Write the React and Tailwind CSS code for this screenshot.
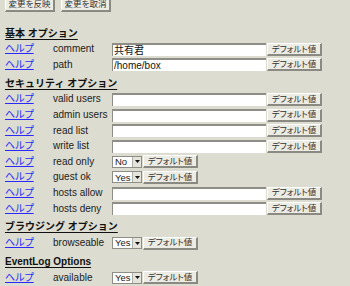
import React from "react";

const Btn = ({ children, className = "" }) => (
  <button
    className={
      "h-[13px] px-[4px] bg-[#ecebe4] border-t border-l border-t-white border-l-white border-r-2 border-b-2 border-r-[#8a8a82] border-b-[#8a8a82] text-[8.5px] leading-none text-[#333] [font-feature-settings:'palt'] flex items-center justify-center whitespace-nowrap " +
      className
    }
  >
    {children}
  </button>
);

const TextInput = ({ value = "" }) => (
  <div className="w-[154px] h-[13px] bg-white border-t-2 border-l border-t-[#8e8e86] border-l-[#8e8e86] text-[10px] leading-[11px] pl-[1px] text-[#111] whitespace-nowrap overflow-hidden">
    {value}
  </div>
);

const Select = ({ value }) => (
  <div className="w-[30px] h-[12px] bg-white border border-[#8e8e86] flex items-center text-[9.5px] leading-none text-[#222]">
    <span className="flex-1 pl-[2px]">{value}</span>
    <span className="w-[9px] h-[10px] bg-[#e4e3dc] border-l border-[#b0b0a8] flex items-center justify-center">
      <svg width="5" height="3" viewBox="0 0 5 3"><path d="M0 0h5L2.5 3z" fill="#111" /></svg>
    </span>
  </div>
);

const Row = ({ label, children }) => (
  <div className="h-[15.6px] flex items-center">
    <a href="#" className="w-[48px] text-[10px] text-[#2a2aff] underline leading-none [font-feature-settings:'palt']">
      ヘルプ
    </a>
    <span className="w-[59px] text-[10px] text-[#222] leading-none">{label}</span>
    <div className="flex items-center gap-[1px]">{children}</div>
  </div>
);

const TextRow = ({ label, value }) => (
  <Row label={label}>
    <TextInput value={value} />
    <Btn className="w-[55px]">デフォルト値</Btn>
  </Row>
);

const SelRow = ({ label, value }) => (
  <Row label={label}>
    <Select value={value} />
    <Btn className="w-[55px]">デフォルト値</Btn>
  </Row>
);

const Heading = ({ children }) => (
  <div className="h-[19px] flex items-end pb-[3px]">
    <span className="font-bold text-[10px] leading-none underline underline-offset-[2px] text-[#111]">
      {children}
    </span>
  </div>
);

export default function App() {
  return (
    <div className="w-[350px] h-[286px] overflow-hidden bg-[#dcdcd0] pl-[5px] font-['Liberation_Sans','Noto_Sans_CJK_JP',sans-serif]">
      <div className="flex gap-[6px] -mt-[2px] h-[12px]">
        <Btn className="w-[50px] h-[14px]">変更を反映</Btn>
        <Btn className="w-[50px] h-[14px]">変更を取消</Btn>
      </div>
      <div className="h-[12.5px]" />
      <Heading>基本 オプション</Heading>
      <TextRow label="comment" value="共有君" />
      <TextRow label="path" value="/home/box" />
      <Heading>セキュリティ オプション</Heading>
      <TextRow label="valid users" />
      <TextRow label="admin users" />
      <TextRow label="read list" />
      <TextRow label="write list" />
      <SelRow label="read only" value="No" />
      <SelRow label="guest ok" value="Yes" />
      <TextRow label="hosts allow" />
      <TextRow label="hosts deny" />
      <Heading>ブラウジング オプション</Heading>
      <SelRow label="browseable" value="Yes" />
      <Heading>EventLog Options</Heading>
      <SelRow label="available" value="Yes" />
    </div>
  );
}
